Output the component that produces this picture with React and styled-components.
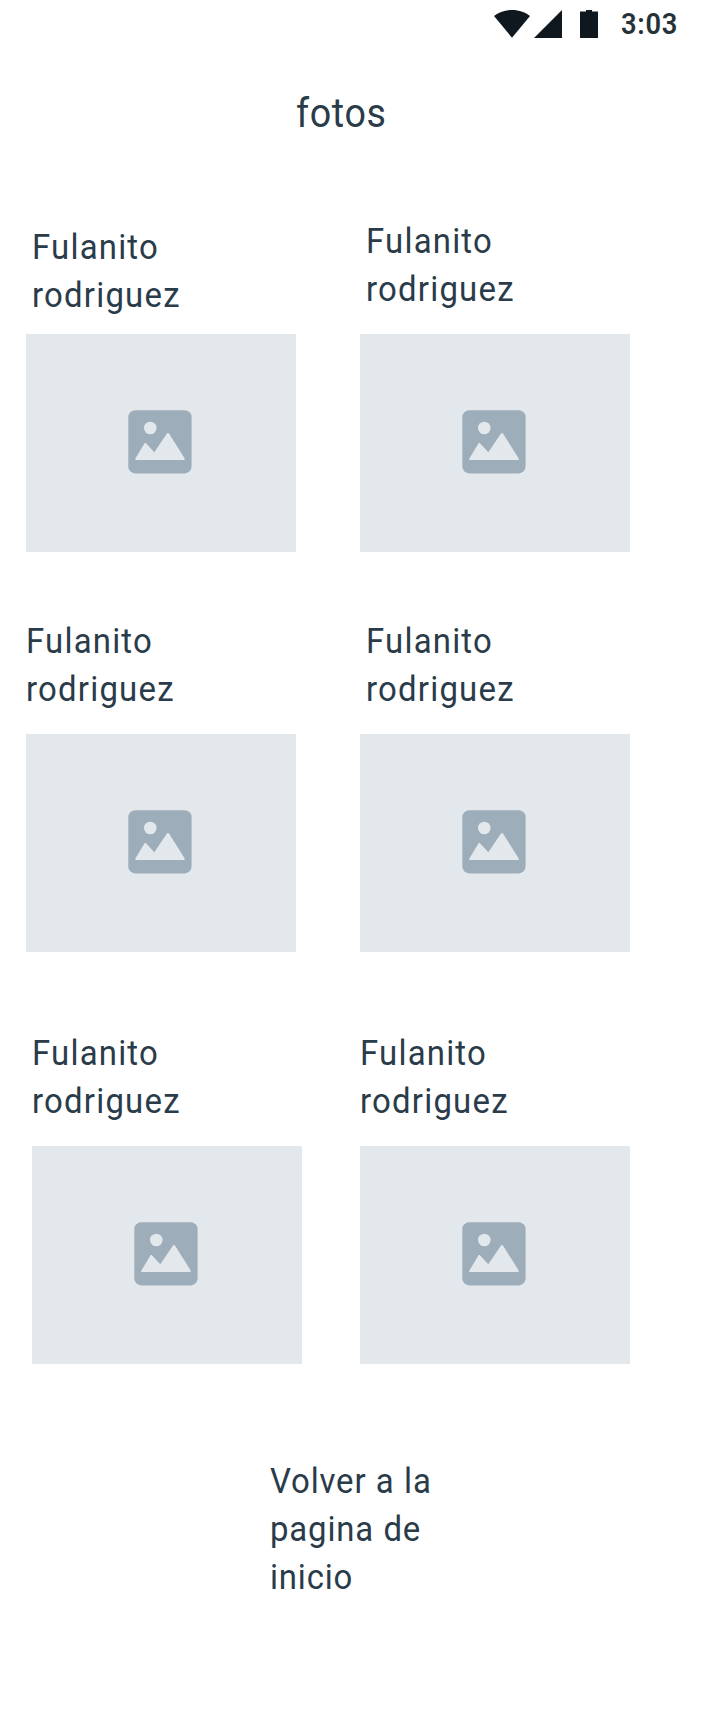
import React from 'react';
import styled, { createGlobalStyle } from 'styled-components';

const GlobalStyle = createGlobalStyle`
  * { box-sizing: border-box; }
  body {
    margin: 0;
    background: #fff;
    font-family: Roboto, "Liberation Sans", sans-serif;
    color: #2a3b49;
  }
`;

const Screen = styled.main`
  width: 720px;
  height: 1712px;
  display: flex;
  flex-direction: column;
  background: #fff;
`;

const StatusBar = styled.header`
  height: 48px;
  padding: 10px 0 0 494px;
  display: flex;
  align-items: flex-start;
`;

const StatusIcons = styled.svg`
  width: 104px;
  height: 28px;
  flex: none;
  fill: #0f181f;
`;

const Narrow = styled.span`
  display: block;
  white-space: pre-line;
  transform: scaleX(0.94);
  transform-origin: left top;
`;

const Clock = styled(Narrow)`
  margin: -2px 0 0 23px;
  font-size: 29px;
  line-height: 32px;
  font-weight: 600;
  letter-spacing: 0.8px;
  color: #263238;
`;

const Title = styled.h1`
  margin: 42px 0 0 296px;
  height: 48px;
  font-size: 40px;
  line-height: 48px;
  font-weight: 400;
  letter-spacing: 0.7px;
`;

const Gallery = styled.section`
  margin: 79px 0 0 26px;
  display: grid;
  grid-template-columns: 270px 270px;
  column-gap: 64px;
  grid-template-rows: 335px 400px 412px;
  align-items: end;
`;

const Card = styled.figure`
  margin: 0 0 0 ${(p) => p.$shift || 0}px;
  width: 270px;
  display: flex;
  flex-direction: column;
  gap: ${(p) => p.$gap || 20}px;
`;

const Label = styled.div`
  padding-left: ${(p) => p.$indent || 0}px;
  font-size: 35px;
  line-height: 48px;
  letter-spacing: ${(p) => p.$tracking || 1.3}px;
`;

const Placeholder = styled.div`
  width: 270px;
  height: 218px;
  padding: 76px 0 0 102px;
  background: #e3e8ec;
`;

const PictureIcon = styled.svg`
  display: block;
  width: 64px;
  height: 64px;
`;

const BackLink = styled(Label)`
  margin: 94px 0 0 270px;
  word-spacing: 0.5px;
`;

const photos = [
  { indent: 6, gap: 14 },
  { indent: 6 },
  {},
  { indent: 6 },
  { shift: 6 },
  {},
];

function Photo({ indent, gap, shift }) {
  return (
    <Card $gap={gap} $shift={shift}>
      <Label as="figcaption" $indent={indent}>
        <Narrow>{'Fulanito\nrodriguez'}</Narrow>
      </Label>
      <Placeholder>
        <PictureIcon viewBox="0 0 64 64">
          <rect x="0.3" y="0.3" width="63.3" height="63.1" rx="7" fill="#9eadba" />
          <circle cx="22.3" cy="18" r="6.3" fill="#e3e8ec" />
          <path
            d="M7.4 48.6 16.4 33.6Q17.3 32.2 18.2 33.4L26.3 42.3 39 23.6Q40 22.2 41 23.6L56.7 48.6Q57.3 50 56 50H8Q6.6 50 7.4 48.6Z"
            fill="#e3e8ec"
          />
        </PictureIcon>
      </Placeholder>
    </Card>
  );
}

export default function App() {
  return (
    <>
      <GlobalStyle />
      <Screen>
        <StatusBar>
          <StatusIcons viewBox="0 0 104 28">
            <path d="M18 27.7 0 6C4.5 2.4 10.5 0 18 0S31.5 2.4 36 6Z" />
            <path d="M40 28 68 0V28Z" />
            <path d="M86 1.6H92V0H98V1.6H104V28H86Z" />
          </StatusIcons>
          <Clock>3:03</Clock>
        </StatusBar>
        <Title>
          <Narrow>fotos</Narrow>
        </Title>
        <Gallery>
          {photos.map((photo, i) => (
            <Photo key={i} {...photo} />
          ))}
        </Gallery>
        <BackLink $tracking={0.9}>
          <Narrow>{'Volver a la\npagina de\ninicio'}</Narrow>
        </BackLink>
      </Screen>
    </>
  );
}
